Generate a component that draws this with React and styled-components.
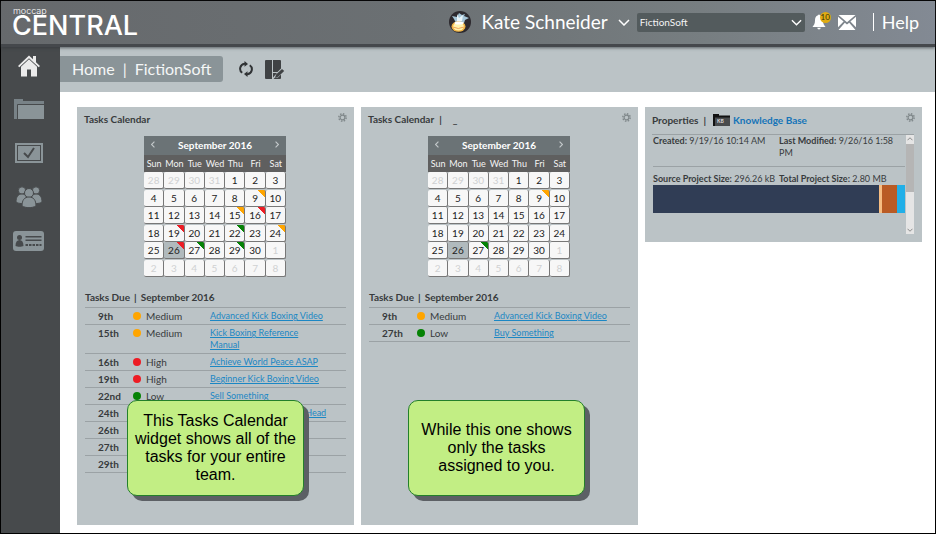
import React from "react";
import styled, { createGlobalStyle, css } from "styled-components";

const colors = {
  rail: "#474a4c",
  muted: "#8a9498",
  panel: "#bbc3c6",
  ink: "#383b3d",
  line: "#9ba2a5",
  link: "#1b87c4",
  orange: "#ffa500",
  red: "#ed1c24",
  green: "#058205",
};

const GlobalStyle = createGlobalStyle`
  *, *::before, *::after { box-sizing: border-box; }
  body {
    margin: 0;
    background: #fff;
    color: ${colors.ink};
    font-family: Lato, "Open Sans", sans-serif;
    font-size: 10px;
    line-height: 12px;
  }
  button, select { font: inherit; }
  svg { display: block; }
`;

const Page = styled.div`
  display: flex;
  flex-direction: column;
  min-height: 100vh;
  border: 1px solid #000;
`;

const Header = styled.header`
  position: relative;
  z-index: 1;
  display: flex;
  align-items: center;
  justify-content: space-between;
  height: 46px;
  padding: 0 16px 0 11px;
  border-bottom: 3px solid #45484c;
  background: linear-gradient(80deg, #66696c 0%, #6b7073 45%, #777e81 75%, #838a94 100%);
  box-shadow: 0 1px 3px rgba(50, 54, 58, 0.7);
  color: #fff;
`;

const Logo = styled.a`
  display: flex;
  flex-direction: column;
  margin-bottom: 2px;
  color: #fff;
  text-decoration: none;
  font-family: Inter, sans-serif;
`;

const LogoTop = styled.span`
  padding-left: 1px;
  font-size: 9px;
  font-weight: 300;
  line-height: 8px;
`;

const LogoName = styled.span`
  font-size: 27px;
  font-weight: 500;
  line-height: 21px;
`;

const HeaderTools = styled.div`
  display: flex;
  align-items: center;
  margin-bottom: 1px;
`;

const UserButton = styled.button`
  display: flex;
  align-items: center;
  gap: 10px;
  margin-right: 7px;
  padding: 0;
  border: 0;
  background: none;
  color: #fff;
  font-size: 19px;
  line-height: 24px;
`;

const SelectWrap = styled.label`
  display: grid;
  align-items: center;
  width: 168px;
  & > * { grid-area: 1 / 1; }
  & > svg { justify-self: end; margin-right: 3px; pointer-events: none; }
`;

const ProjectSelect = styled.select`
  appearance: none;
  width: 100%;
  height: 19px;
  padding: 0 20px 0 3px;
  border: 0;
  border-radius: 2px;
  background: #535b5d;
  color: #f4f4f4;
`;

const IconButton = styled.button`
  display: flex;
  position: relative;
  padding: 0;
  border: 0;
  background: none;
  color: ${(p) => p.$color || "#fff"};
`;

const Alerts = styled(IconButton)`
  margin: 0 12px 0 7px;
`;

const Badge = styled.span`
  position: absolute;
  top: -2px;
  left: 8px;
  width: 11px;
  height: 11px;
  border-radius: 50%;
  background: #e0ac12;
  color: #332b10;
  font-size: 8px;
  line-height: 11px;
  text-align: center;
`;

const HelpLink = styled.a`
  margin-left: 17px;
  padding-left: 8px;
  border-left: 1px solid #fff;
  color: #fff;
  font-size: 18px;
  line-height: 18px;
  text-decoration: none;
`;

const Body = styled.div`
  display: flex;
  flex: 1;
`;

const Rail = styled.nav`
  display: flex;
  flex: none;
  flex-direction: column;
  width: 59px;
  background: ${colors.rail};
`;

const RailLink = styled.a`
  display: flex;
  align-items: center;
  justify-content: center;
  height: 44px;
  padding-right: 4px;
  color: ${(p) => (p.$active ? "#ebebeb" : colors.muted)};
  &:first-child { height: 40px; padding-bottom: 2px; }
`;

const Main = styled.main`
  flex: 1;
  min-width: 0;
`;

const Toolbar = styled.div`
  display: flex;
  align-items: center;
  height: 45px;
  padding-bottom: 1px;
  background: ${colors.panel};
`;

const Breadcrumb = styled.nav`
  display: flex;
  gap: 8px;
  margin-right: 16px;
  padding: 0 12px;
  border-radius: 0 3px 3px 0;
  background: ${colors.muted};
  color: #f4f6f6;
  font-size: 16px;
  line-height: 26px;
`;

const Crumb = styled.a`
  color: inherit;
  text-decoration: none;
`;

const ToolButtons = styled.div`
  display: flex;
  align-items: center;
  gap: 12px;
`;

const Widgets = styled.div`
  display: grid;
  grid-template-columns: repeat(3, minmax(0, 1fr));
  align-items: start;
  gap: 7px;
  padding: 15px 13px 7px 17px;
`;

const Card = styled.section`
  position: relative;
  padding: 6px 7px 8px;
  background: ${colors.panel};
`;

const TaskCard = styled(Card)`
  min-height: 418px;
`;

const CardHead = styled.header`
  display: flex;
  align-items: flex-start;
  justify-content: space-between;
`;

const CardTitle = styled.h2`
  display: flex;
  align-items: center;
  margin: 0;
  font-size: 10px;
  font-weight: 700;
  line-height: 12px;
`;

const TitleBar = styled.span`
  margin: 0 ${(p) => p.$gap}px 0 5px;
`;

const Calendar = styled.div`
  width: 142px;
  margin: 11px 0 0 60px;
`;

const MonthBar = styled.div`
  display: flex;
  align-items: center;
  justify-content: space-between;
  height: 19px;
  padding: 0 7px 2px;
  background: #6b7376;
  color: #fff;
  font-weight: 700;
`;

const Days = styled.table`
  width: 100%;
  height: 122px;
  border-collapse: collapse;
  table-layout: fixed;
  th {
    height: 17px;
    padding: 0;
    background: #5f5f5f;
    color: #f4f4f4;
    font-size: 9px;
    font-weight: 400;
    white-space: nowrap;
  }
`;

const Day = styled.td`
  padding: 0;
  text-align: center;
  background: ${colors.panel};
  color: ${(p) => (p.$out ? "#cfd1d2" : "#222")};
`;

const DayFace = styled.div`
  height: 17px;
  border-right: 1px solid #777;
  border-bottom: 1px solid #777;
  border-radius: 2px;
  line-height: 17px;
  background: ${(p) => (p.$today ? "#b1babd" : "#f7f7f7")};
  ${(p) =>
    p.$flag &&
    css`
      background: linear-gradient(45deg, transparent calc(100% - 5px), ${p.$flag} calc(100% - 5px)),
        ${p.$today ? "#b1babd" : "#f7f7f7"};
    `}
`;

const DueTitle = styled.h3`
  display: flex;
  gap: 4px;
  margin: 14px 0 4px 1px;
  font-size: 10px;
  line-height: 12px;
`;

const DueTable = styled.table`
  width: calc(100% - 2px);
  margin-left: 1px;
  border-collapse: collapse;
  border-top: 1px solid ${colors.line};
  table-layout: fixed;
  tr { border-bottom: 1px solid ${colors.line}; }
  td, th { padding: 2px 0; vertical-align: top; text-align: left; }
`;

const DateCell = styled.th`
  width: 48px;
  && { padding-left: 13px; }
`;

const PriorityCell = styled.td`
  width: 77px;
`;

const Priority = styled.span`
  display: flex;
  align-items: center;
  gap: 5px;
  &::before {
    content: "";
    width: 8px;
    height: 8px;
    border-radius: 50%;
    background: ${(p) => p.$color};
  }
`;

const TaskCell = styled.td`
  font-size: 9px;
  && { padding-right: 17px; }
`;

const TaskLink = styled.a`
  color: ${colors.link};
`;

const Callout = styled.p`
  position: absolute;
  bottom: 29px;
  left: ${(p) => p.$left}px;
  display: flex;
  align-items: center;
  justify-content: center;
  width: 177px;
  height: 96px;
  margin: 0;
  padding: 0 6px;
  border: 1px solid #23802a;
  border-radius: 10px;
  background: #c2ee84;
  box-shadow: 5px 5px 0 #5c6065;
  color: #000;
  font-family: "Liberation Sans", Arial, sans-serif;
  font-size: 16px;
  line-height: 18px;
  text-align: center;
`;

const KbLink = styled.a`
  display: flex;
  align-items: center;
  gap: 3px;
  color: #1574b8;
  text-decoration: none;
`;

const PropTitle = styled(CardTitle)`
  height: 14px;
`;

const Scroller = styled.div`
  display: flex;
  margin: 7px 1px 0 0;
  border-top: 1px solid ${colors.line};
`;

const PropBody = styled.div`
  flex: 1;
  min-width: 0;
  padding: 0 1px;
  font-size: 9px;
`;

const PropGrid = styled.dl`
  display: grid;
  grid-template-columns: repeat(2, minmax(0, 1fr));
  margin: 0;
  & + & { margin-top: 7px; padding-top: 6px; border-top: 1px solid ${colors.line}; }
  dt, dd { display: inline; margin: 0; }
  dt { font-weight: 700; }
`;

const Prop = styled.div``;

const UsageBar = styled.div`
  display: flex;
  height: 28px;
`;

const Segment = styled.span`
  flex: ${(p) => p.$share};
  background: ${(p) => p.$color};
`;

const Scrollbar = styled.div`
  display: flex;
  flex: none;
  flex-direction: column;
  align-items: center;
  justify-content: space-between;
  width: 8px;
  height: 99px;
  padding: 2px 0;
  background: #e5e5e5;
  color: #8b8b8b;
`;

const Thumb = styled.div`
  width: 100%;
  height: 48px;
  margin: 3px 0 auto;
  background: #b5b5b5;
`;

const chevronPaths = {
  down: "M1 1L6 6L11 1",
  up: "M1 6L6 1L11 6",
  left: "M6 1L1 6L6 11",
  right: "M1 1L6 6L1 11",
};

const Chevron = ({ dir = "down", w = 12, h = 7, stroke = 1.5 }) => {
  const side = dir === "left" || dir === "right";
  return (
    <svg width={w} height={h} viewBox={side ? "0 0 7 12" : "0 0 12 7"} fill="none" stroke="currentColor" strokeWidth={stroke}>
      <path d={chevronPaths[dir]} />
    </svg>
  );
};

const Avatar = () => (
  <svg width="22" height="22" viewBox="0 0 22 22">
    <circle cx="11" cy="11" r="11" fill="#2d2a2f" />
    <path d="M3 5l5 1 2-4 3 2 3-1-1 2 5 2-4 2-1 3H7L5 8z" fill="#a5c5d8" />
    <path d="M8 3l2 4 4-3-1 6-5 1z" fill="#e9f5fa" />
    <ellipse cx="9.500" cy="15.500" rx="7" ry="5.200" fill="#f0b445" />
    <ellipse cx="9.500" cy="15.500" rx="5.400" ry="4" fill="#fff3ae" />
    <path d="M4 16q5 3 11 0" stroke="#f0a45a" fill="none" />
    <ellipse cx="10" cy="12" rx="4.500" ry="1.500" fill="#fff" />
  </svg>
);

const Bell = () => (
  <svg width="14" height="16" viewBox="0 0 14 16" fill="currentColor">
    <path d="M6 1.200a1.100 1.100 0 0 1 2 0C10.300 2 11 4 11 6.500c0 3 1 4.500 2.500 6.500H.5C2 11 3 9.500 3 6.500 3 4 3.700 2 6 1.200zM5.300 13.800h3.400a1.700 1.700 0 0 1-3.400 0z" />
  </svg>
);

const Mail = () => (
  <svg width="18" height="15" viewBox="0 0 18 15" fill="currentColor">
    <path d="M.5 0h17L9 7.300zM0 1.700l5.600 4.900L0 12.300zM18 1.700v10.600l-5.600-5.700zM.5 15l6.300-7.300L9 9.500l2.200-1.800 6.300 7.300z" />
  </svg>
);

const Home = () => (
  <svg width="22" height="22" viewBox="0 0 22 22" fill="currentColor">
    <path d="M11 .5L0 11l1.300 1.300L11 3.200l9.700 9.100L22 11l-4-3.800V1h-3v3.300z" />
    <path d="M11 4.200L3 11.800V21.500h6V14.500h4v7h6v-9.700z" />
  </svg>
);

const Folder = () => (
  <svg width="30" height="20" viewBox="0 0 30 20">
    <path d="M0 0h9v2h21v18H0z" fill="#788287" />
    <path d="M4 5.500h26V20H4z" fill={colors.muted} />
    <path d="M3.500 20V5.500H30" fill="none" stroke={colors.rail} />
  </svg>
);

const TaskIcon = () => (
  <svg width="28" height="20" viewBox="0 0 28 20">
    <rect width="28" height="20" fill="currentColor" />
    <rect x="2.500" y="2.500" width="23" height="15" fill="none" stroke={colors.rail} />
    <path d="M9 10l4 4 6-9" fill="none" stroke={colors.rail} strokeWidth="2" />
  </svg>
);

const People = () => (
  <svg width="26" height="22" viewBox="0 0 26 22" fill="currentColor" stroke={colors.rail}>
    <circle cx="6" cy="4.500" r="3.700" />
    <circle cx="20" cy="4.500" r="3.700" />
    <path d="M0 16c0-5 2-8 6-8s5 3 5 8c-3 2-8 2-11 0zM15 16c0-5 1-8 5-8s6 3 6 8c-3 2-8 2-11 0z" />
    <circle cx="13" cy="7" r="4.500" />
    <path d="M6 20c0-6 2.500-9 7-9s7 3 7 9c-4 2.200-10 2.200-14 0z" />
  </svg>
);

const IdCard = () => (
  <svg width="31" height="20" viewBox="0 0 31 20">
    <rect width="31" height="20" rx="3" fill="currentColor" />
    <g fill={colors.rail}>
      <circle cx="6.500" cy="6.500" r="2.500" />
      <path d="M2.500 15c0-4 1.500-6 4-6s4 2 4 6c-2 1-6 1-8 0z" />
      <path d="M12.500 5h16v1.500h-16zM12.500 8.500h16V10h-16z" />
    </g>
    <path d="M12.500 14h16" stroke={colors.rail} strokeWidth="2" strokeDasharray="2.500 1" />
  </svg>
);

const Refresh = () => (
  <svg width="14" height="16" viewBox="0 0 14 16">
    <g fill="none" stroke="currentColor" strokeWidth="2">
      <path d="M6 2.800H5.500A5 5 0 0 0 3.200 11.800" />
      <path d="M8 13.200h.5A5 5 0 0 0 10.800 4.200" />
    </g>
    <path d="M5.500 0v5.800L9 2.900zM8.500 16v-5.800L5 13.100z" fill="currentColor" />
  </svg>
);

const EditLayout = () => (
  <svg width="20" height="19" viewBox="0 0 20 19" fill="currentColor">
    <path d="M0 1q0-1 1-1h6v19H1q-1 0-1-1zM8 0h7q1 0 1 1v7.500L12.500 12H8z" />
    <path d="M8 13h4l-4 4.500zM16 14.500V18q0 1-1 1H8.500l1.500-1.500h3z" />
    <path d="M17 9l2.200 2-6 5.800-3.200 1 1.100-3.200z" />
  </svg>
);

const Gear = () => (
  <svg width="9" height="9" viewBox="0 0 9 9" fill="none" stroke="currentColor">
    <circle cx="4.500" cy="4.500" r="2.400" strokeWidth="1.200" />
    <circle cx="4.500" cy="4.500" r="3.700" strokeWidth="1.400" strokeDasharray="1.500 1.400" />
  </svg>
);

const KbFolder = () => (
  <svg width="17" height="12" viewBox="0 0 17 12">
    <path d="M0 0h6v1.500h11V12H0z" fill="#111" />
    <path d="M2 3.500h15V12H2z" fill="#484b4d" />
    <text x="4" y="9" fill="#ddd" fontSize="5" fontWeight="700">KB</text>
  </svg>
);

const weekdays = ["Sun", "Mon", "Tue", "Wed", "Thu", "Fri", "Sat"];
const cells = Array.from({ length: 42 }, (_, i) => {
  const n = i - 3;
  if (n < 1) return { day: n + 31, out: true };
  if (n > 30) return { day: n - 30, out: true };
  return { day: n, out: false };
});
const weeks = [0, 1, 2, 3, 4, 5].map((w) => cells.slice(w * 7, w * 7 + 7));

const levels = { Low: colors.green, Medium: colors.orange, High: colors.red };

const teamTasks = [
  { day: 9, date: "9th", level: "Medium", title: "Advanced Kick Boxing Video" },
  { day: 15, date: "15th", level: "Medium", title: "Kick Boxing Reference Manual" },
  { day: 16, date: "16th", level: "High", title: "Achieve World Peace ASAP" },
  { day: 19, date: "19th", level: "High", title: "Beginner Kick Boxing Video" },
  { day: 22, date: "22nd", level: "Low", title: "Sell Something" },
  { day: 24, date: "24th", level: "Medium", title: "Boxing Kicks Above the Head" },
  { day: 26, date: "26th", level: "High" },
  { day: 27, date: "27th", level: "Low", title: "Buy Something" },
  { day: 29, date: "29th", level: "Low" },
];

const myTasks = [teamTasks[0], teamTasks[7]];

const usage = [
  { color: "#303d55", share: 224 },
  { color: "#f6bd82", share: 3 },
  { color: "#b95b25", share: 15 },
  { color: "#20afe8", share: 8 },
];

const SettingsButton = () => (
  <IconButton aria-label="Widget settings" $color="#7f878a">
    <Gear />
  </IconButton>
);

function TasksWidget({ tasks, filtered, calloutLeft, children }) {
  const flags = Object.fromEntries(tasks.map((t) => [t.day, levels[t.level]]));
  return (
    <TaskCard>
      <CardHead>
        <CardTitle>
          Tasks Calendar
          {filtered && <><TitleBar $gap={11}>|</TitleBar>_</>}
        </CardTitle>
        <SettingsButton />
      </CardHead>
      <Calendar>
        <MonthBar>
          <IconButton aria-label="Previous month" $color="#c3c8ca"><Chevron dir="left" w={4} h={7} stroke={2} /></IconButton>
          September 2016
          <IconButton aria-label="Next month" $color="#c3c8ca"><Chevron dir="right" w={4} h={7} stroke={2} /></IconButton>
        </MonthBar>
        <Days>
          <thead>
            <tr>{weekdays.map((d) => <th key={d}>{d}</th>)}</tr>
          </thead>
          <tbody>
            {weeks.map((week, i) => (
              <tr key={i}>
                {week.map(({ day, out }) => (
                  <Day key={day} $out={out}>
                    <DayFace $today={day === 26 && !out} $flag={!out && flags[day]}>{day}</DayFace>
                  </Day>
                ))}
              </tr>
            ))}
          </tbody>
        </Days>
      </Calendar>
      <DueTitle>
        <span>Tasks Due</span>
        <span>|</span>
        <span>September 2016</span>
      </DueTitle>
      <DueTable>
        <tbody>
          {tasks.map((t) => (
            <tr key={t.date}>
              <DateCell scope="row">{t.date}</DateCell>
              <PriorityCell><Priority $color={levels[t.level]}>{t.level}</Priority></PriorityCell>
              <TaskCell>{t.title && <TaskLink href="#task">{t.title}</TaskLink>}</TaskCell>
            </tr>
          ))}
        </tbody>
      </DueTable>
      <Callout $left={calloutLeft}>{children}</Callout>
    </TaskCard>
  );
}

function PropertiesWidget() {
  return (
    <Card>
      <CardHead>
        <PropTitle>
          Properties<TitleBar $gap={7}>|</TitleBar>
          <KbLink href="#kb"><KbFolder />Knowledge Base</KbLink>
        </PropTitle>
        <SettingsButton />
      </CardHead>
      <Scroller>
        <PropBody>
          <PropGrid>
            <Prop><dt>Created:</dt> <dd>9/19/16 10:14 AM</dd></Prop>
            <Prop><dt>Last Modified:</dt> <dd>9/26/16 1:58 PM</dd></Prop>
          </PropGrid>
          <PropGrid>
            <Prop><dt>Source Project Size:</dt> <dd>296.26 kB</dd></Prop>
            <Prop><dt>Total Project Size:</dt> <dd>2.80 MB</dd></Prop>
          </PropGrid>
          <UsageBar>
            {usage.map((u) => <Segment key={u.color} $color={u.color} $share={u.share} />)}
          </UsageBar>
        </PropBody>
        <Scrollbar>
          <Chevron dir="up" w={6} h={4} stroke={2} />
          <Thumb />
          <Chevron w={6} h={4} stroke={2} />
        </Scrollbar>
      </Scroller>
    </Card>
  );
}

export default function App() {
  return (
    <Page>
      <GlobalStyle />
      <Header>
        <Logo href="#home">
          <LogoTop>moccap</LogoTop>
          <LogoName>CENTRAL</LogoName>
        </Logo>
        <HeaderTools>
          <UserButton><Avatar />Kate Schneider<Chevron /></UserButton>
          <SelectWrap>
            <ProjectSelect aria-label="Project" defaultValue="FictionSoft">
              <option>FictionSoft</option>
            </ProjectSelect>
            <Chevron w={11} />
          </SelectWrap>
          <Alerts aria-label="Notifications"><Bell /><Badge>10</Badge></Alerts>
          <IconButton aria-label="Messages"><Mail /></IconButton>
          <HelpLink href="#help">Help</HelpLink>
        </HeaderTools>
      </Header>
      <Body>
        <Rail aria-label="Main">
          <RailLink href="#home" aria-label="Home" $active><Home /></RailLink>
          <RailLink href="#projects" aria-label="Projects"><Folder /></RailLink>
          <RailLink href="#tasks" aria-label="Tasks"><TaskIcon /></RailLink>
          <RailLink href="#teams" aria-label="Teams"><People /></RailLink>
          <RailLink href="#users" aria-label="Users"><IdCard /></RailLink>
        </Rail>
        <Main>
          <Toolbar>
            <Breadcrumb aria-label="Breadcrumb">
              <Crumb href="#home">Home</Crumb>
              <span>|</span>
              <Crumb href="#fictionsoft">FictionSoft</Crumb>
            </Breadcrumb>
            <ToolButtons>
              <IconButton aria-label="Refresh" $color="#303335"><Refresh /></IconButton>
              <IconButton aria-label="Edit layout" $color="#3f4244"><EditLayout /></IconButton>
            </ToolButtons>
          </Toolbar>
          <Widgets>
            <TasksWidget tasks={teamTasks} calloutLeft={50}>
              This Tasks Calendar widget shows all of the tasks for your entire team.
            </TasksWidget>
            <TasksWidget tasks={myTasks} filtered calloutLeft={47}>
              While this one shows only the tasks assigned to you.
            </TasksWidget>
            <PropertiesWidget />
          </Widgets>
        </Main>
      </Body>
    </Page>
  );
}
